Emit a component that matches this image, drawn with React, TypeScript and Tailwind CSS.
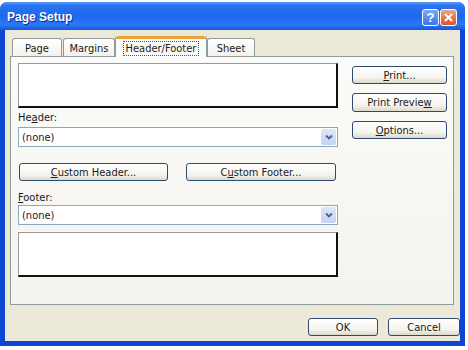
import React from "react";

const FONT = "font-['DejaVu_Sans_Condensed','DejaVu_Sans',sans-serif]";

function Btn({ children, className }: { children: React.ReactNode; className: string }) {
  return (
    <div
      className={
        "flex items-center justify-center rounded-[3px] border border-[#2E4A6E] bg-[linear-gradient(180deg,#FFFFFF_0%,#F5F4EF_65%,#DCD8CC_100%)] text-[11px] leading-none text-[#1a1a1a] " +
        className
      }
    >
      {children}
    </div>
  );
}

function Combo() {
  return (
    <div className="flex h-[20px] w-[320px] items-center border border-[#8FA5C0] bg-white">
      <div className="flex-1 pl-[3px] text-[11px] leading-none text-[#1a1a1a]">(none)</div>
      <div className="mr-[1px] flex h-[16px] w-[15px] items-center justify-center rounded-[2px] bg-[linear-gradient(180deg,#DDE7FA_0%,#C3D3F5_100%)]">
        <svg width="8" height="6" viewBox="0 0 8 6">
          <path d="M1 1.5 L4 4.5 L7 1.5" fill="none" stroke="#4D6185" strokeWidth="1.8" />
        </svg>
      </div>
    </div>
  );
}

function Preview() {
  return (
    <div className="h-[45px] w-[320px] border-t border-l border-t-[#9A9A9A] border-l-[#9A9A9A] border-r-2 border-b-2 border-r-[#111] border-b-[#111] bg-white" />
  );
}

export default function App() {
  return (
    <div className={"h-[350px] w-[468px] bg-white pt-[2px] " + FONT}>
      <div className="flex h-[344px] w-[465px] flex-col overflow-hidden rounded-t-[7px] bg-[#0D46D2]">
        {/* title bar */}
        <div className="flex h-[28px] items-center bg-[linear-gradient(180deg,#5A9DF9_0%,#2A74F0_12%,#1D68EE_50%,#2A78F5_80%,#1656DC_100%)] pl-[7px] pr-[8px]">
          <div className="flex-1 pt-[2px] font-['Liberation_Sans',sans-serif] text-[12px] font-bold text-white [text-shadow:1px_1px_0_#0A2E8A]">
            Page Setup
          </div>
          <div className="flex gap-[1px] pt-[3px]">
            <div className="flex h-[17px] w-[17px] items-center justify-center rounded-[3px] border border-white bg-[linear-gradient(180deg,#7AA8F8_0%,#3B74EC_100%)] font-['Liberation_Sans',sans-serif] text-[13px] font-bold leading-none text-white">
              ?
            </div>
            <div className="flex h-[17px] w-[17px] items-center justify-center rounded-[3px] border border-white bg-[linear-gradient(180deg,#F2A283_0%,#DE5428_100%)]">
              <svg width="9" height="9" viewBox="0 0 9 9">
                <path d="M1 1 L8 8 M8 1 L1 8" stroke="white" strokeWidth="2" />
              </svg>
            </div>
          </div>
        </div>

        {/* client */}
        <div className="mx-[5px] mb-[5px] flex flex-1 flex-col bg-[#ECE9D8] pl-[5px] pt-[6px]">
          {/* tabs */}
          <div className="relative z-10 flex h-[20px] items-end pl-[2px]">
            <div className="flex h-[18px] w-[50px] items-center justify-center rounded-t-[3px] border border-b-0 border-[#919B9C] bg-[linear-gradient(180deg,#FFFFFF_0%,#F3F2EC_100%)] pt-[1px] text-[11px] leading-none text-[#1a1a1a]">
              Page
            </div>
            <div className="ml-[1px] flex h-[18px] w-[52px] items-center justify-center rounded-t-[3px] border border-b-0 border-[#919B9C] bg-[linear-gradient(180deg,#FFFFFF_0%,#F3F2EC_100%)] pt-[1px] text-[11px] leading-none text-[#1a1a1a]">
              Margins
            </div>
            <div className="mb-[-1px] flex h-[21px] w-[92px] flex-col rounded-t-[3px] border border-b-0 border-t-0 border-[#919B9C] bg-[#FBFBF9]">
              <div className="h-[3px] rounded-t-[3px] bg-[#E8A33A]" />
              <div className="flex flex-1 items-center justify-center">
                <span className="border border-dotted border-[#555] px-[2px] py-[1px] text-[11px] leading-none text-[#1a1a1a]">
                  Header/Footer
                </span>
              </div>
            </div>
            <div className="flex h-[18px] w-[48px] items-center justify-center rounded-t-[3px] border border-b-0 border-[#919B9C] bg-[linear-gradient(180deg,#FFFFFF_0%,#F3F2EC_100%)] pt-[1px] text-[11px] leading-none text-[#1a1a1a]">
              Sheet
            </div>
          </div>

          {/* panel */}
          <div className="flex h-[249px] w-[444px] border border-[#919B9C] bg-[linear-gradient(180deg,#FBFBF9_0%,#F4F3EE_100%)] pl-[7px] pt-[6px]">
            <div className="flex w-[320px] flex-col">
              <Preview />
              <div className="mt-[3px] h-[13px] text-[11px] leading-[13px] text-[#1a1a1a]">
                He<span className="underline">a</span>der:
              </div>
              <div className="mt-[3px]">
                <Combo />
              </div>
              <div className="mt-[16px] flex h-[18px]">
                <Btn className="ml-[1px] h-[18px] w-[149px]">
                  <span>
                    <span className="underline">C</span>ustom Header...
                  </span>
                </Btn>
                <Btn className="ml-[18px] h-[18px] w-[150px]">
                  <span>
                    C<span className="underline">u</span>stom Footer...
                  </span>
                </Btn>
              </div>
              <div className="mt-[10px] h-[13px] text-[11px] leading-[13px] text-[#1a1a1a]">
                <span className="underline">F</span>ooter:
              </div>
              <div className="mt-[1px]">
                <Combo />
              </div>
              <div className="mt-[7px]">
                <Preview />
              </div>
            </div>
            <div className="ml-[14px] flex w-[95px] flex-col pt-[3px]">
              <Btn className="h-[18px] w-[95px]">
                <span>
                  <span className="underline">P</span>rint...
                </span>
              </Btn>
              <Btn className="mt-[9px] h-[19px] w-[95px]">
                <span>
                  Print Previe<span className="underline">w</span>
                </span>
              </Btn>
              <Btn className="mt-[9px] h-[18px] w-[95px]">
                <span>
                  <span className="underline">O</span>ptions...
                </span>
              </Btn>
            </div>
          </div>

          {/* bottom buttons */}
          <div className="mt-[13px] flex h-[18px] justify-end pr-[0px]">
            <Btn className="h-[18px] w-[70px]">OK</Btn>
            <Btn className="ml-[10px] h-[18px] w-[72px]">Cancel</Btn>
          </div>
        </div>
      </div>
    </div>
  );
}
